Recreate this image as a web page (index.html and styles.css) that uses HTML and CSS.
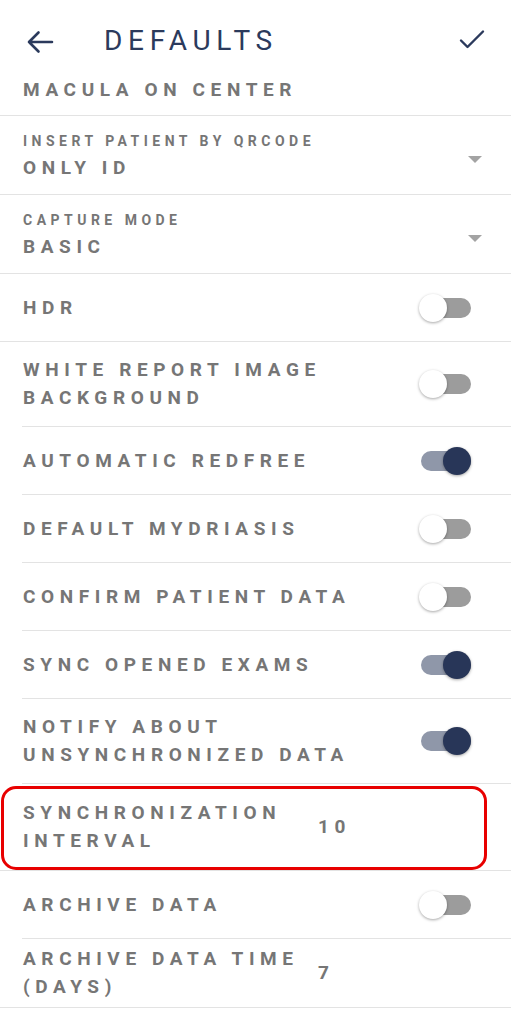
FILE: index.html
```html
<!DOCTYPE html>
<html lang="en">
<head>
<meta charset="utf-8">
<title>Defaults</title>
<link rel="stylesheet" href="styles.css">
</head>
<body>
<div class="screen">
  <header class="topbar">
    <button class="icon-btn back" aria-label="Back">
      <svg width="28" height="24" viewBox="0 0 28 24"><path d="M26 12H3 M12.5 2.5 L3 12 L12.5 21.5" fill="none" stroke="#2b3a5c" stroke-width="2.6" stroke-linecap="round" stroke-linejoin="round"/></svg>
    </button>
    <h1 class="title">DEFAULTS</h1>
    <button class="icon-btn confirm" aria-label="Save">
      <svg width="26" height="22" viewBox="0 0 26 22"><path d="M2 11.5 L8.5 18 L24 2.5" fill="none" stroke="#2b3a5c" stroke-width="2.4" stroke-linecap="round" stroke-linejoin="round"/></svg>
    </button>
  </header>

  <div class="list">
    <div class="row full first"><span class="label">MACULA ON CENTER</span></div>

    <div class="row full select">
      <div class="select-text">
        <span class="caption">INSERT PATIENT BY QRCODE</span>
        <span class="label">ONLY ID</span>
      </div>
      <span class="caret"></span>
    </div>

    <div class="row full select">
      <div class="select-text">
        <span class="caption">CAPTURE MODE</span>
        <span class="label">BASIC</span>
      </div>
      <span class="caret"></span>
    </div>

    <div class="row full"><span class="label">HDR</span><span class="switch"></span></div>
    <div class="row inset tall"><span class="label">WHITE REPORT IMAGE BACKGROUND</span><span class="switch"></span></div>
    <div class="row inset"><span class="label">AUTOMATIC REDFREE</span><span class="switch on"></span></div>
    <div class="row inset"><span class="label">DEFAULT MYDRIASIS</span><span class="switch"></span></div>
    <div class="row inset"><span class="label">CONFIRM PATIENT DATA</span><span class="switch"></span></div>
    <div class="row inset"><span class="label">SYNC OPENED EXAMS</span><span class="switch on"></span></div>
    <div class="row inset tall"><span class="label">NOTIFY ABOUT UNSYNCHRONIZED DATA</span><span class="switch on"></span></div>

    <div class="row full input highlight">
      <span class="label fixed">SYNCHRONIZATION INTERVAL</span>
      <span class="label value">10</span>
    </div>

    <div class="row inset"><span class="label">ARCHIVE DATA</span><span class="switch"></span></div>

    <div class="row full input compact">
      <span class="label fixed">ARCHIVE DATA TIME (DAYS)</span>
      <span class="label value">7</span>
    </div>
  </div>
</div>
</body>
</html>
```

FILE: styles.css
```css
html, body {
  margin: 0;
  padding: 0;
  background: #ffffff;
}

body {
  font-family: Roboto, "Liberation Sans", Arial, sans-serif;
}

.screen {
  width: 511px;
  min-height: 1024px;
  background: #ffffff;
}

.topbar {
  display: flex;
  align-items: center;
  height: 70px;
  box-sizing: border-box;
  padding: 11px 26px 0 26px;
}

.icon-btn {
  display: flex;
  align-items: center;
  justify-content: center;
  border: 0;
  background: none;
  padding: 0;
  margin: 0;
}

.back {
  margin-top: 2px;
}

.confirm {
  margin-top: -2px;
}

.title {
  flex: 1;
  margin: 0 0 0 50px;
  font-size: 28px;
  line-height: 28px;
  font-weight: 400;
  letter-spacing: 0.205em;
  color: #2b3a5c;
}

.list {
  display: flex;
  flex-direction: column;
}

.row {
  display: flex;
  align-items: center;
  min-height: 68px;
  box-sizing: border-box;
  border-bottom: 1px solid #e3e3e3;
  padding-right: 40px;
}

.row.full {
  padding-left: 23px;
}

.row.inset {
  margin-left: 22px;
  padding-left: 1px;
}

.row.first {
  min-height: 0;
  height: 46px;
  align-items: flex-start;
  padding-top: 6px;
}

.row.tall {
  padding-top: 14px;
  padding-bottom: 14px;
}

.row.select {
  min-height: 0;
  padding: 16px 29px 12px 23px;
}

.row.input {
  padding-top: 15px;
  padding-bottom: 15px;
}

.row.input.compact {
  padding-top: 6px;
  padding-bottom: 6px;
}

.label {
  flex: 1;
  font-size: 19px;
  line-height: 28px;
  font-weight: 700;
  letter-spacing: 0.295em;
  color: #767676;
}

.label.fixed {
  flex: none;
  width: 295px;
}

.label.value {
  flex: 1;
}

.select-text {
  flex: 1;
  display: flex;
  flex-direction: column;
}

.caption {
  font-size: 14px;
  line-height: 18px;
  font-weight: 700;
  letter-spacing: 0.32em;
  color: #767676;
  margin-bottom: 4px;
}

.caret {
  width: 0;
  height: 0;
  margin-top: 4px;
  border-left: 7px solid transparent;
  border-right: 7px solid transparent;
  border-top: 7px solid #a3a3a3;
}

.switch {
  position: relative;
  flex: none;
  width: 50px;
  height: 20px;
  border-radius: 10px;
  background: #9c9c9c;
}

.switch::after {
  content: "";
  position: absolute;
  top: -4px;
  left: -2px;
  width: 28px;
  height: 28px;
  border-radius: 50%;
  background: #ffffff;
  box-shadow: 0 1px 3px rgba(0, 0, 0, 0.35);
}

.switch.on {
  background: #8f97a9;
}

.switch.on::after {
  left: 22px;
  background: #283658;
}

.row.highlight {
  position: relative;
}

.row.highlight::after {
  content: "";
  position: absolute;
  left: 1px;
  right: 24px;
  top: 2px;
  bottom: 0;
  border: 3.5px solid #e80000;
  border-radius: 15px;
  pointer-events: none;
}
```
